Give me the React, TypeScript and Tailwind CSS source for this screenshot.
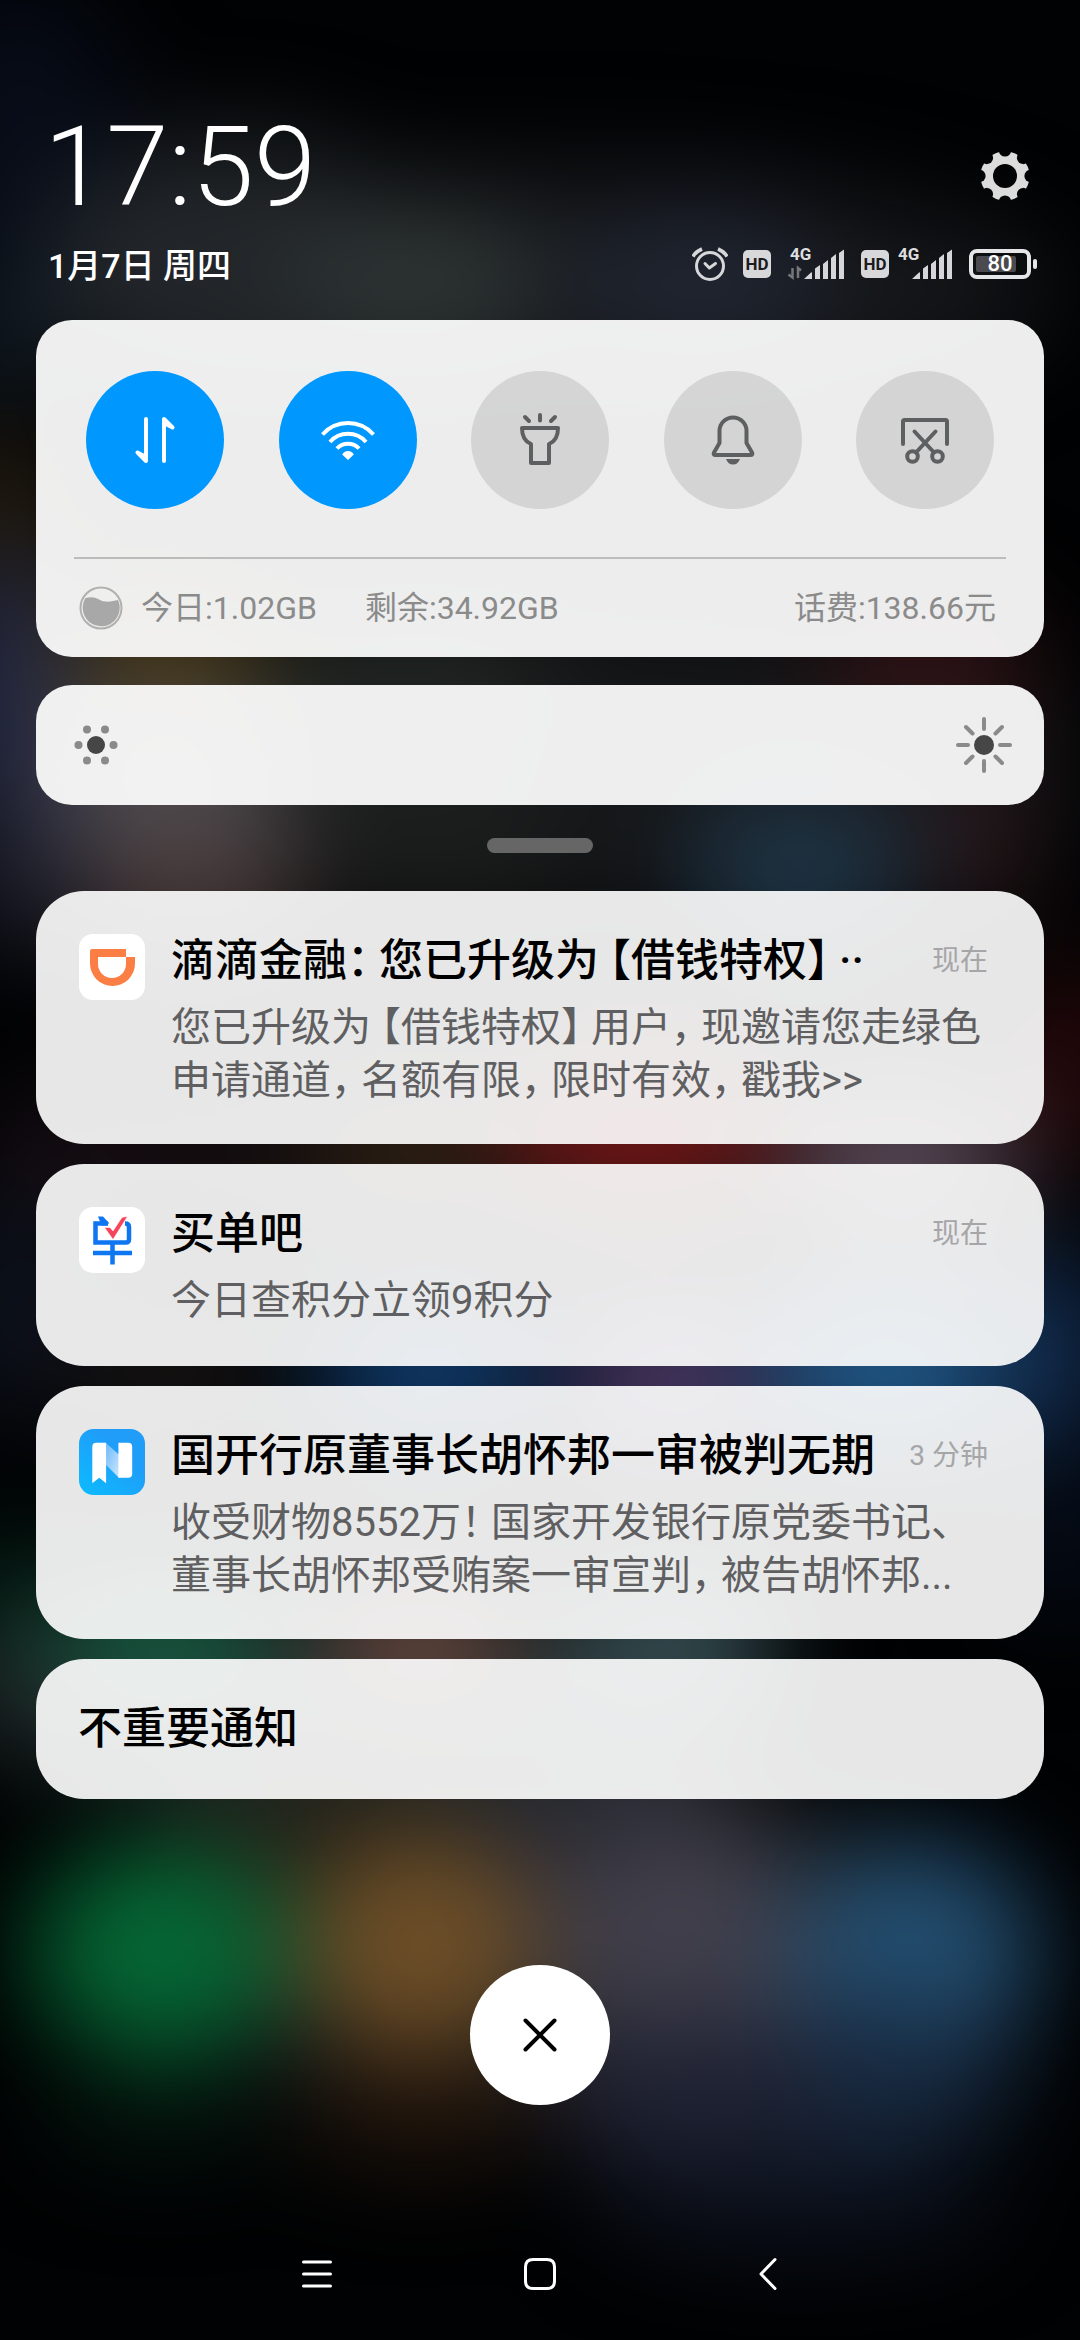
import React from "react";

type Glow = [cx: number, cy: number, rx: number, ry: number, color: string];

/* Colour spots of the home screen, seen through the shade. */
const glows: Glow[] = [
  [20, 150, 110, 170, "#070c18"],
  [540, 290, 520, 120, "#15171a"],
  [230, 265, 190, 130, "#22262a"],
  [420, 280, 130, 80, "#2d3333"],
  [700, 280, 130, 80, "#202531"],
  [0, 340, 60, 70, "#0e1922"],
  [0, 520, 70, 90, "#261d0f"],
  [540, 760, 540, 160, "#151618"],
  [10, 690, 80, 140, "#232842"],
  [170, 660, 110, 80, "#443616"],
  [400, 690, 150, 90, "#202422"],
  [930, 665, 110, 70, "#301316"],
  [170, 810, 120, 110, "#4f4b4f"],
  [190, 900, 120, 60, "#453636"],
  [20, 880, 70, 70, "#1c1e2c"],
  [430, 850, 150, 80, "#1b1c1c"],
  [800, 870, 120, 90, "#1e3242"],
  [980, 850, 60, 70, "#2a191c"],
  [540, 1150, 540, 90, "#140e10"],
  [90, 1150, 110, 60, "#180e14"],
  [410, 1150, 100, 60, "#302214"],
  [640, 1130, 140, 90, "#6b1616"],
  [900, 1160, 120, 80, "#584856"],
  [1070, 1060, 50, 100, "#300a0c"],
  [10, 1300, 80, 120, "#0c111c"],
  [170, 1370, 110, 70, "#161313"],
  [430, 1370, 120, 80, "#103a69"],
  [670, 1380, 110, 80, "#483763"],
  [890, 1370, 130, 90, "#205787"],
  [1050, 1350, 70, 110, "#11294a"],
  [1060, 1530, 60, 90, "#060d1a"],
  [10, 1640, 60, 110, "#06241a"],
  [350, 1690, 420, 100, "#20292a"],
  [165, 1640, 110, 70, "#175b42"],
  [420, 1640, 100, 70, "#65463e"],
  [670, 1640, 110, 70, "#364f54"],
  [540, 1930, 460, 170, "#14181a"],
  [600, 1860, 180, 120, "#282931"],
  [320, 1880, 180, 120, "#211f17"],
  [160, 1950, 130, 108, "#056634"],
  [420, 1945, 120, 112, "#6d4e27"],
  [680, 1950, 130, 130, "#413f4b"],
  [915, 1952, 125, 110, "#234e70"],
  [870, 2075, 150, 75, "#172a41"],
  [690, 2095, 140, 80, "#1f2233"],
  [420, 2110, 130, 60, "#1e130b"],
  [160, 2110, 120, 50, "#04120c"],
  [800, 2200, 200, 50, "#0c111d"],
];

function Backdrop() {
  return (
    <svg
      className="absolute inset-0 size-full"
      viewBox="0 0 1080 2340"
      preserveAspectRatio="none"
      aria-hidden="true"
    >
      <defs>
        <filter
          id="soften"
          x="-20%"
          y="-20%"
          width="140%"
          height="140%"
          colorInterpolationFilters="sRGB"
        >
          <feGaussianBlur stdDeviation="50" />
        </filter>
      </defs>
      <rect width="1080" height="2340" fill="#010203" />
      <g filter="url(#soften)">
        {glows.map(([cx, cy, rx, ry, color], i) => (
          <ellipse key={i} cx={cx} cy={cy} rx={rx} ry={ry} fill={color} />
        ))}
      </g>
    </svg>
  );
}

/* Full-width CJK punctuation is set three quarters of an em wide. */
function Cjk({ text }: { text: string }) {
  return (
    <>
      {text.split(/([【】，：！])/).map((part, i) => {
        if (part === "【") {
          return (
            <span key={i} className="ml-2.5 [font-feature-settings:'halt']">
              {part}
            </span>
          );
        }
        if (/^[】，：！]$/.test(part)) {
          return (
            <span key={i} className="mr-2.5 [font-feature-settings:'halt']">
              {part}
            </span>
          );
        }
        return <React.Fragment key={i}>{part}</React.Fragment>;
      })}
    </>
  );
}

function GearIcon() {
  return (
    <svg className="size-12" viewBox="-24 -24 48 48" aria-hidden="true">
      <mask id="gear-cut">
        <rect x="-24" y="-24" width="48" height="48" fill="#fff" />
        {[0, 45, 90, 135, 180, 225, 270, 315].map((a) => (
          <ellipse key={a} cx="0" cy="-25" rx="6" ry="5.6" fill="#000" transform={`rotate(${a})`} />
        ))}
        <circle r="12" fill="#000" />
      </mask>
      <circle r="24.5" fill="#dcdcdc" mask="url(#gear-cut)" />
    </svg>
  );
}

function AlarmIcon() {
  return (
    <svg
      className="h-9 w-[36px]"
      viewBox="-18 -20 36 36"
      fill="none"
      stroke="#d6d7d9"
      strokeWidth="3"
      strokeLinecap="round"
      strokeLinejoin="round"
      aria-hidden="true"
    >
      <circle r="13.5" />
      <path d="M-5 -2.5 -.7 2 5.5-2.5" />
      <path strokeWidth="3.6" strokeLinecap="butt" d="M-17-9.5Q-14-14.5-8-17M17-9.5Q14-14.5 8-17" />
    </svg>
  );
}

function HdBadge() {
  return (
    <span className="flex size-7 items-center justify-center rounded-[5px] bg-[#d8d8da] text-[17px] leading-none font-bold text-[#1b1b20]">
      HD
    </span>
  );
}

function Signal({ active }: { active?: boolean }) {
  return (
    <span className={active ? "flex w-[58px] flex-col" : "flex w-[55px] flex-col"}>
      <span className={active ? "grid pl-[3px]" : "grid"}>
        <span className="col-start-1 row-start-1 self-start text-[17px] leading-3 font-bold text-[#dededf]">
          4G
        </span>
        <svg
          className="col-start-1 row-start-1 h-8 w-[55px] overflow-visible"
          viewBox="0 0 55 32"
          fill="#d6d6d8"
          aria-hidden="true"
        >
          <path d="M14 31 21 24.500Q22 24 22 25V31ZM25 31V20.500L30 17V31ZM33 31V16L38 12V31ZM41 31V10L46 6V31ZM49 31V5L54 1.500V31Z" />
          {active && (
            <path
              d="M2.500 20V29.500L-1.500 26.500M8 30V20L11 22.500"
              fill="none"
              stroke="#77777b"
              strokeWidth="2.500"
            />
          )}
        </svg>
      </span>
    </span>
  );
}

function Battery({ level }: { level: number }) {
  return (
    <span className="flex items-center gap-[2px]">
      <span className="grid h-[30px] w-[62px] items-center rounded-lg border-4 border-[#e6e6e8] px-[3px]">
        <span className="col-start-1 row-start-1 h-4 w-10 rounded-xs bg-[#4b4b4f]" />
        <span className="col-start-1 row-start-1 text-center text-[22px] leading-none font-medium text-white">
          {level}
        </span>
      </span>
      <span className="h-[10px] w-1 rounded-full bg-[#e6e6e8]" />
    </span>
  );
}

function DataIcon() {
  return (
    <g stroke="#fff" strokeWidth="4" strokeLinejoin="round" strokeLinecap="round" fill="#fff">
      <path d="M-9-21V21L-17.500 12.500-9 17Z" />
      <path d="M9 21V-21L17.500-12.500 9-17Z" />
    </g>
  );
}

function WifiIcon() {
  return (
    <g stroke="#fff" strokeWidth="4" fill="none">
      <path d="M-25.500-5.500A34 34 0 0 1 25.500-5.500" />
      <path d="M-18 2A24 24 0 0 1 18 2" />
      <path d="M-11 8.500A15 15 0 0 1 11 8.500" />
      <path stroke="none" fill="#fff" d="M0 20-5.800 14.500Q-4 11 0 11T5.800 14.500Z" />
    </g>
  );
}

const line = {
  stroke: "#5d5f61",
  strokeWidth: 4,
  strokeLinecap: "round",
  strokeLinejoin: "round",
  fill: "none",
} as const;

function TorchIcon() {
  return (
    <g {...line}>
      <path d="M-18-12H18Q18 .5 9 4V23H-9V4Q-18 .5-18-12Z" />
      <path d="M0-25V-19.500M-15-23-11-19M15-23 11-19" />
    </g>
  );
}

function BellIcon() {
  return (
    <g {...line}>
      <path d="M-13.500 3V-9A13.500 13.500 0 0 1 13.500-9V3L19 12.500Q20 15 18 15H-18Q-20 15-19 12.500Z" />
      <path stroke="none" fill="#5d5f61" d="M-7 19H7Q5 24.500 0 24.500T-7 19Z" />
    </g>
  );
}

function ScreenshotIcon() {
  return (
    <g {...line}>
      <path d="M-22 4V-18.500Q-22-20-20.500-20H20.500Q22-20 22-18.500V4" />
      <path d="M-10.500-8.500 9 12.500M10.500-8.500-9 12.500" />
      <circle cx="-12.500" cy="16.500" r="5.300" />
      <circle cx="12.500" cy="16.500" r="5.300" />
    </g>
  );
}

const tiles = [
  { label: "移动数据", on: true, Icon: DataIcon },
  { label: "WLAN", on: true, Icon: WifiIcon },
  { label: "手电筒", on: false, Icon: TorchIcon },
  { label: "静音", on: false, Icon: BellIcon },
  { label: "截屏", on: false, Icon: ScreenshotIcon },
];

function QuickPanel() {
  return (
    <section className="rounded-[36px] bg-white/93">
      <div className="flex justify-between px-[50px] pt-[51px] pb-12">
        {tiles.map(({ label, on, Icon }) => (
          <button
            key={label}
            type="button"
            aria-label={label}
            aria-pressed={on}
            className={
              on
                ? "flex size-[138px] items-center justify-center rounded-full bg-[#0098ff]"
                : "flex size-[138px] items-center justify-center rounded-full bg-black/10"
            }
          >
            <svg className="size-16" viewBox="-32 -32 64 64" aria-hidden="true">
              <Icon />
            </svg>
          </button>
        ))}
      </div>
      <div className="mx-[38px] h-[2px] bg-[#bcbcbc]" />
      <div className="flex h-[98px] items-center pr-12 pl-[43px] text-[32px] leading-10 text-[#8b8b8b]">
        <svg className="mr-[18px] size-11" viewBox="-22 -22 44 44" aria-hidden="true">
          <circle r="20.500" fill="none" stroke="#b0b0b0" strokeWidth="2" />
          <path
            fill="#a8a8a8"
            d="M-15.500-10C-5-13-2-7 4-6.500 9-6 13-7 17-8A18.500 18.500 0 1 1-15.500-10Z"
          />
        </svg>
        <span>今日:1.02GB</span>
        <span className="ml-12">剩余:34.92GB</span>
        <span className="ml-auto">话费:138.66元</span>
      </div>
    </section>
  );
}

function BrightnessPanel() {
  return (
    <section className="mt-7 flex h-[120px] items-center rounded-[36px] bg-white/93 px-8">
      <svg className="size-14" viewBox="-28 -28 56 56" fill="#8a8a8a" aria-hidden="true">
        <circle r="9" fill="#464646" />
        <circle cx="-17.500" r="4" />
        <circle cx="17.500" r="4" />
        <circle cx="-9" cy="-15.500" r="4" />
        <circle cx="9" cy="-15.500" r="4" />
        <circle cx="-9" cy="15.500" r="4" />
        <circle cx="9" cy="15.500" r="4" />
      </svg>
      <input
        type="range"
        aria-label="亮度"
        defaultValue={0}
        className="h-full min-w-0 flex-1 appearance-none bg-transparent [&::-webkit-slider-thumb]:appearance-none"
      />
      <svg
        className="size-14"
        viewBox="-28 -28 56 56"
        stroke="#8a8a8a"
        strokeWidth="4"
        strokeLinecap="round"
        aria-hidden="true"
      >
        <circle r="10" fill="#464646" stroke="none" />
        <path d="M0-26V-16M0 26V16M-26 0H-16M26 0H16M-18-18-11.500-11.500M18-18 11.500-11.500M-18 18-11.500 11.500M18 18 11.500 11.500" />
      </svg>
    </section>
  );
}

function RideLogo() {
  return (
    <svg className="size-[66px] shrink-0" viewBox="0 0 66 66" aria-hidden="true">
      <rect width="66" height="66" rx="14" fill="#fff" />
      <path
        fill="#fb7f45"
        fillRule="evenodd"
        d="M11 17Q11 15 13 15H47V23H56V29.500A22.500 22.500 0 0 1 11 29.500ZM19 23V30A14 14 0 0 0 47 30V23Z"
      />
    </svg>
  );
}

function BillLogo() {
  return (
    <svg className="size-[66px] shrink-0" viewBox="0 0 66 66" aria-hidden="true">
      <rect width="66" height="66" rx="14" fill="#fff" />
      <g fill="none" stroke="#0f76f2" strokeWidth="4.500">
        <path d="M29 16.500H16.500V35.500H47Q50 35.500 50 32V20Q50 16.500 46 16.500" />
        <path d="M14 46H53M33.500 36V57.500" />
      </g>
      <path fill="#0f76f2" d="M19 9.500H24L30 16 28 18.500H22.500Z" />
      <path fill="#f5445c" stroke="#fff" strokeWidth=".6" d="M25.500 20.500H31L34 24 42.500 11Q44 9.500 48.500 9.500L34 32.500Z" />
    </svg>
  );
}

function NewsLogo() {
  return (
    <svg className="size-[66px] shrink-0" viewBox="0 0 67 67" aria-hidden="true">
      <defs>
        <linearGradient id="news-bg" x1="0" y1="1" x2="0.6" y2="0.3">
          <stop offset="0" stopColor="#0cbcff" />
          <stop offset="1" stopColor="#1f9df9" />
        </linearGradient>
        <linearGradient id="news-fold" x1="0" y1="0" x2="1" y2="1">
          <stop offset="0" stopColor="#6bb9fa" />
          <stop offset="1" stopColor="#cfe7fd" />
        </linearGradient>
      </defs>
      <rect width="67" height="67" rx="15" fill="url(#news-bg)" />
      <path fill="url(#news-fold)" d="M27 14 41 26.500V50L27 36Z" />
      <path fill="#fff" d="M13.500 18Q13.500 14 17.500 14H27.500V55L20.500 49.500 13.500 55Z" />
      <path fill="#fff" d="M40 14H50Q54 14 54 18V45.500Q54 49.500 50 49.500H40Z" />
    </svg>
  );
}

const notifications = [
  {
    Logo: RideLogo,
    title: "滴滴金融：您已升级为【借钱特权】··",
    time: "现在",
    lines: ["您已升级为【借钱特权】用户，现邀请您走绿色", "申请通道，名额有限，限时有效，戳我>>"],
  },
  {
    Logo: BillLogo,
    title: "买单吧",
    time: "现在",
    lines: ["今日查积分立领9积分"],
  },
  {
    Logo: NewsLogo,
    title: "国开行原董事长胡怀邦一审被判无期",
    time: "3 分钟",
    lines: ["收受财物8552万！国家开发银行原党委书记、", "董事长胡怀邦受贿案一审宣判，被告胡怀邦..."],
  },
];

function NotificationCard({ Logo, title, time, lines }: (typeof notifications)[number]) {
  return (
    <article className="flex min-h-[202px] items-start rounded-[48px] bg-[#fefefe]/91 pt-10 pr-14 pb-[37px] pl-[43px]">
      <div className="pt-[3px]">
        <Logo />
      </div>
      <div className="ml-[26px] min-w-0 flex-1">
        <div className="flex items-center justify-between">
          <h2 className="text-[44px] leading-[60px] font-medium whitespace-nowrap text-black">
            <Cjk text={title} />
          </h2>
          <time className="text-[28px] leading-10 whitespace-nowrap text-[#a6a6a8]">{time}</time>
        </div>
        <p className="mt-[10px] text-[40px] leading-[53px] whitespace-nowrap text-[#5f5f61]">
          {lines.map((text) => (
            <span key={text} className="block">
              <Cjk text={text} />
            </span>
          ))}
        </p>
      </div>
    </article>
  );
}

export default function App() {
  return (
    <div className="relative min-h-screen overflow-hidden bg-black font-[Roboto,'Noto_Sans_CJK_SC',sans-serif]">
      <Backdrop />
      <div className="relative flex min-h-screen flex-col">
        <main className="flex flex-1 flex-col px-9 pt-[108px]">
          <header className="flex flex-col pr-[7px] pl-3">
            <div className="flex items-center justify-between">
              <time className="-ml-1 text-[112px] leading-[118px] font-light text-white">17:59</time>
              <button type="button" aria-label="设置" className="mt-[18px] mr-2">
                <GearIcon />
              </button>
            </div>
            <div className="mt-4 flex h-12 items-center justify-between">
              <span className="text-[34px] leading-[48px] font-medium text-white">
                1月7日 周四
              </span>
              <div className="mb-1 flex items-center">
                <AlarmIcon />
                <span className="ml-[15px]">
                  <HdBadge />
                </span>
                <span className="ml-4">
                  <Signal active />
                </span>
                <span className="ml-4">
                  <HdBadge />
                </span>
                <span className="ml-[9px]">
                  <Signal />
                </span>
                <span className="ml-4">
                  <Battery level={80} />
                </span>
              </div>
            </div>
          </header>

          <div className="mt-[30px]">
            <QuickPanel />
            <BrightnessPanel />
          </div>

          <div className="mx-auto mt-[33px] h-[15px] w-[106px] rounded-full bg-[#666]" />

          <div className="mt-[38px] flex flex-col gap-5">
            {notifications.map((item) => (
              <NotificationCard key={item.title} {...item} />
            ))}
            <button
              type="button"
              className="flex h-[140px] items-center rounded-[48px] bg-[#fefefe]/91 pl-[42px] text-[44px] font-medium text-black"
            >
              不重要通知
            </button>
          </div>

          <button
            type="button"
            aria-label="清除全部通知"
            className="mx-auto mt-[166px] flex size-[140px] items-center justify-center rounded-full bg-white"
          >
            <svg className="size-10" viewBox="-20 -20 40 40" aria-hidden="true">
              <path d="M-14.500-14.500 14.500 14.500M14.500-14.500-14.500 14.500" stroke="#000" strokeWidth="4" strokeLinecap="round" />
            </svg>
          </button>
        </main>

        <nav className="flex h-[132px] items-center justify-center">
          {[
            { label: "最近任务", d: "M-13.500-12H13.500M-13.500 0H13.500M-13.500 12H13.500" },
            { label: "主屏幕", d: "M-14.500-7Q-14.500-14.500-7-14.500H7Q14.500-14.500 14.500-7V7Q14.500 14.500 7 14.500H-7Q-14.500 14.500-14.500 7Z" },
            { label: "返回", d: "M12-14.500-2 0 12 14.500" },
          ].map(({ label, d }) => (
            <button
              key={label}
              type="button"
              aria-label={label}
              className="flex h-full w-[223px] items-center justify-center"
            >
              <svg
                className="size-10"
                viewBox="-20 -20 40 40"
                fill="none"
                stroke="#fff"
                strokeWidth="3"
                strokeLinecap="round"
                strokeLinejoin="round"
                aria-hidden="true"
              >
                <path d={d} />
              </svg>
            </button>
          ))}
        </nav>
      </div>
    </div>
  );
}
